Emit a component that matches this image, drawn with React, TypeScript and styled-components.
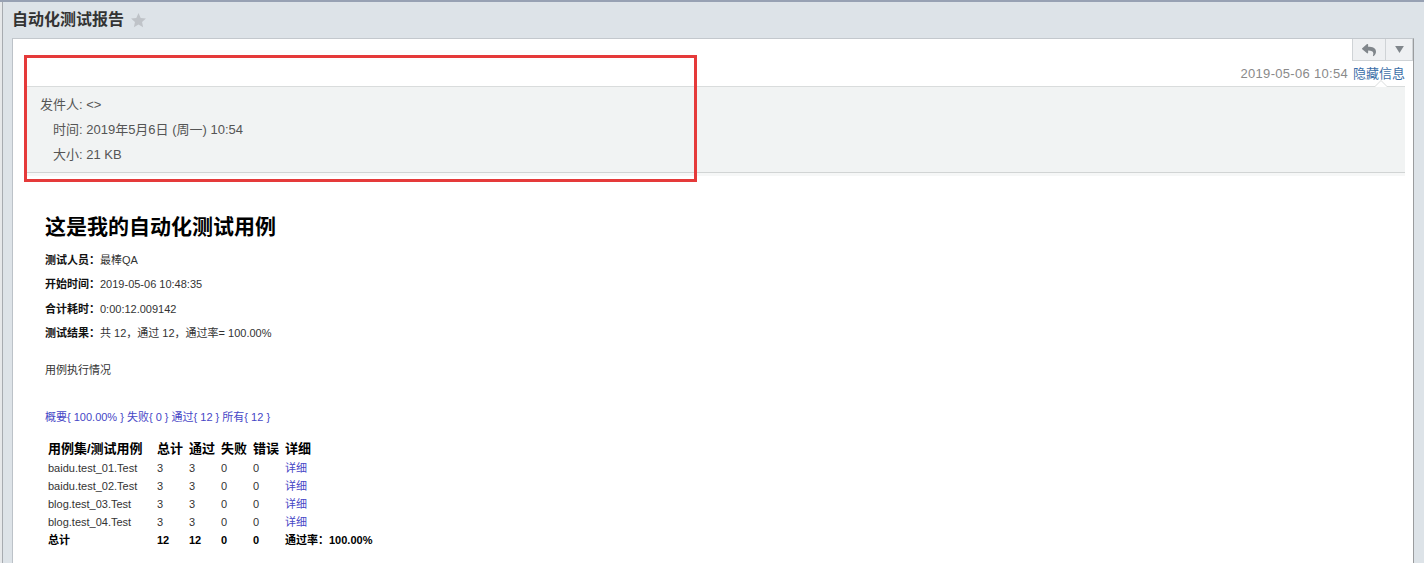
import styled, { createGlobalStyle } from "styled-components";
import { FaReply } from "react-icons/fa";

const FONT = `"Liberation Sans", "Noto Sans CJK SC", sans-serif`;

const rows = [
    { name: "baidu.test_01.Test", total: 3, pass: 3, fail: 0, error: 0 },
    { name: "baidu.test_02.Test", total: 3, pass: 3, fail: 0, error: 0 },
    { name: "blog.test_03.Test", total: 3, pass: 3, fail: 0, error: 0 },
    { name: "blog.test_04.Test", total: 3, pass: 3, fail: 0, error: 0 },
];

export default function App() {
    return (
        <>
            <GlobalStyle />
            <Page>
                <TitleBar>
                    <Title>自动化测试报告</Title>
                    <Star viewBox="0 0 24 24">
                        <polygon points="12,1.5 15.1,8.3 22.5,9.1 17,14.1 18.5,21.5 12,17.8 5.5,21.5 7,14.1 1.5,9.1 8.9,8.3" />
                    </Star>
                </TitleBar>
                <Panel>
                    <Toolbar>
                        <ToolButton $wide>
                            <FaReply size={14} />
                        </ToolButton>
                        <ToolButton>
                            <Caret viewBox="0 0 10 8">
                                <polygon points="0,0 10,0 5,8" />
                            </Caret>
                        </ToolButton>
                    </Toolbar>
                    <DateRow>
                        <DateText>2019-05-06 10:54</DateText>
                        <HideLink>隐藏信息</HideLink>
                    </DateRow>
                    <InfoBox>
                        <InfoLine>发件人: &lt;&gt;</InfoLine>
                        <InfoLine $indent>时间: 2019年5月6日 (周一) 10:54</InfoLine>
                        <InfoLine $indent>大小: 21 KB</InfoLine>
                    </InfoBox>
                    <Body>
                        <Heading>这是我的自动化测试用例</Heading>
                        <Attr><b>测试人员：</b>最棒QA</Attr>
                        <Attr><b>开始时间：</b>2019-05-06 10:48:35</Attr>
                        <Attr><b>合计耗时：</b>0:00:12.009142</Attr>
                        <Attr><b>测试结果：</b>共 12，通过 12，通过率= 100.00%</Attr>
                        <Section>用例执行情况</Section>
                        <Filters>
                            <Link>概要{"{ 100.00% }"}</Link> <Link>失败{"{ 0 }"}</Link>{" "}
                            <Link>通过{"{ 12 }"}</Link> <Link>所有{"{ 12 }"}</Link>
                        </Filters>
                        <Table>
                            <HeadCell>用例集/测试用例</HeadCell>
                            <HeadCell>总计</HeadCell>
                            <HeadCell>通过</HeadCell>
                            <HeadCell>失败</HeadCell>
                            <HeadCell>错误</HeadCell>
                            <HeadCell>详细</HeadCell>
                            {rows.map((r) => (
                                <Row key={r.name}>
                                    <Cell>{r.name}</Cell>
                                    <Cell>{r.total}</Cell>
                                    <Cell>{r.pass}</Cell>
                                    <Cell>{r.fail}</Cell>
                                    <Cell>{r.error}</Cell>
                                    <Cell><Link>详细</Link></Cell>
                                </Row>
                            ))}
                            <Row $total>
                                <Cell>总计</Cell>
                                <Cell>12</Cell>
                                <Cell>12</Cell>
                                <Cell>0</Cell>
                                <Cell>0</Cell>
                                <Cell>通过率：100.00%</Cell>
                            </Row>
                        </Table>
                    </Body>
                </Panel>
                <Annotation />
            </Page>
        </>
    );
}

const GlobalStyle = createGlobalStyle`
    html, body {
        margin: 0;
        padding: 0;
        background: #dde3e8;
    }
    body {
        font-family: ${FONT};
    }
`;

const Page = styled.div`
    position: relative;
    display: flex;
    flex-direction: column;
    height: 563px;
    overflow: hidden;
    box-sizing: border-box;
    border-top: 2px solid #97a1b3;
    background:
        linear-gradient(to right, #e6e8ea 0 2px, #a7abb0 2px 3px, transparent 3px),
        #dde3e8;
`;

const TitleBar = styled.div`
    display: flex;
    align-items: center;
    gap: 6px;
    height: 36px;
    padding-left: 12px;
`;

const Title = styled.h1`
    margin: 0;
    font-family: ${FONT};
    font-size: 16px;
    font-weight: 700;
    color: #333;
    line-height: 20px;
`;

const Star = styled.svg`
    width: 17px;
    height: 17px;
    fill: #bfc3c8;
`;

const Panel = styled.div`
    flex: 1;
    margin: 0 10px 0 12px;
    background: #fff;
    border-top: 1px solid #c3c8cd;
    border-left: 1px solid #bcc2c8;
    border-right: 1px solid #9a9c9e;
    display: flex;
    flex-direction: column;
`;

const Toolbar = styled.div`
    display: flex;
    justify-content: flex-end;
    height: 22px;
`;

const ToolButton = styled.div<{ $wide?: boolean }>`
    display: flex;
    align-items: center;
    justify-content: center;
    width: ${({ $wide }) => ($wide ? "33px" : "28px")};
    box-sizing: border-box;
    height: 22px;
    border: 1px solid #cfd3d6;
    border-top: none;
    border-right: ${({ $wide }) => ($wide ? "none" : "1px solid #cfd3d6")};
    background: #eef0f2;
    color: #80868b;
`;

const Caret = styled.svg`
    width: 9px;
    height: 7px;
    fill: #80868b;
`;

const DateRow = styled.div`
    display: flex;
    justify-content: flex-end;
    gap: 5px;
    height: 25px;
    line-height: 25px;
    padding-right: 8px;
    font-size: 13px;
`;

const DateText = styled.span`
    color: #8a8a8a;
    letter-spacing: 0.3px;
`;

const HideLink = styled.span`
    color: #3b6ea8;
`;

const InfoBox = styled.div`
    position: relative;
    margin: 0 8px 0 12px;
    padding: 5px 0 5px 15px;
    background: #f1f3f3;
    border-top: 1px solid #d9dcdc;
    border-bottom: 1px solid #d1d4d4;
    box-shadow: 0 3px 0 #f6f7f7;

    &::before,
    &::after {
        content: "";
        position: absolute;
        right: 18px;
        border: 6px solid transparent;
        border-top: none;
    }
    &::before {
        top: -7px;
        border-bottom: 6px solid #d9dcdc;
    }
    &::after {
        top: -6px;
        border-bottom: 6px solid #fff;
    }
`;

const InfoLine = styled.div<{ $indent?: boolean }>`
    height: 25px;
    line-height: 25px;
    font-size: 13px;
    color: #555;
    padding-left: ${({ $indent }) => ($indent ? "13px" : "0")};
`;

const Body = styled.div`
    padding: 39px 0 0 32px;
    color: #333;
`;

const Heading = styled.h2`
    margin: 0 0 6px;
    font-size: 21px;
    line-height: 30px;
    font-weight: 700;
    color: #000;
`;

const Attr = styled.p`
    margin: 0;
    font-size: 11px;
    line-height: 24.4px;
    color: #333;

    b {
        color: #111;
    }
`;

const Section = styled.p`
    margin: 12px 0 0;
    font-size: 11px;
    line-height: 24px;
    color: #333;
`;

const Filters = styled.p`
    margin: 23px 0 0;
    font-size: 11px;
    line-height: 24px;
`;

const Link = styled.span`
    color: #4646c6;
`;

const Table = styled.div`
    display: grid;
    grid-template-columns: 109px 32px 32px 32px 32px auto;
    margin-top: 10px;
    padding-left: 3px;
`;

const HeadCell = styled.div`
    font-size: 13px;
    font-weight: 700;
    color: #000;
    line-height: 20px;
`;

const Row = styled.div<{ $total?: boolean }>`
    display: contents;
    font-size: 11px;
    font-weight: ${({ $total }) => ($total ? 700 : 400)};
    color: ${({ $total }) => ($total ? "#000" : "#333")};
`;

const Cell = styled.div`
    line-height: 18.2px;
`;

const Annotation = styled.div`
    position: absolute;
    left: 24px;
    top: 53px;
    width: 673px;
    height: 127px;
    box-sizing: border-box;
    border: 3px solid #e53a3a;
    pointer-events: none;
`;
